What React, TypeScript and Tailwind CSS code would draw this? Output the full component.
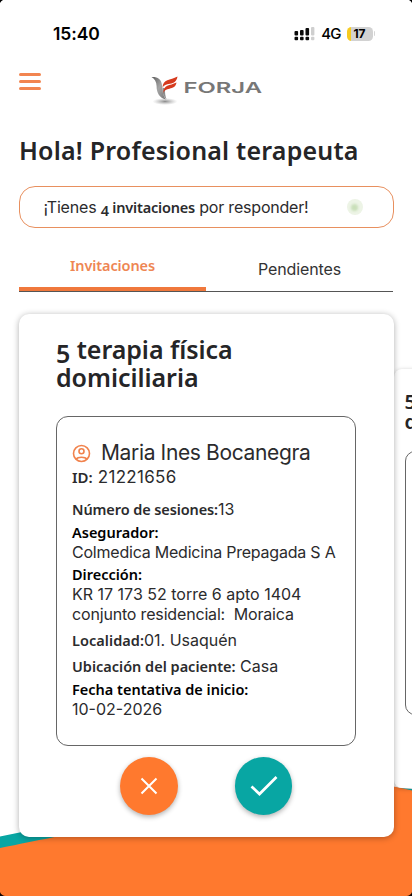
import React from "react";

const heading = "font-['Noto_Sans',sans-serif] font-semibold";

function StatusBar() {
  return (
    <div className="flex h-[56px] items-start justify-between pr-[37px] pl-[53px] font-['Inter',sans-serif] text-black">
      <span className="mt-[22px] text-[17.5px] leading-[24px] font-semibold tracking-[-0.1px]">15:40</span>
      <div className="mt-[26px] flex h-[15px] items-center">
        <svg width="21" height="15" viewBox="0 0 21 15" className="mr-[6px]">
          <g fill="#0a0a0a">
            <rect x="0.5" y="5" width="3.6" height="4.6" rx="1" />
            <rect x="6" y="4" width="3.6" height="5.6" rx="1" />
            <rect x="11.5" y="2" width="3.6" height="7.6" rx="1" />
            <rect x="0.5" y="10.8" width="3.6" height="3.4" rx="1" />
            <rect x="6" y="10.8" width="3.6" height="3.4" rx="1" />
            <rect x="11.5" y="10.8" width="3.6" height="3.4" rx="1" />
          </g>
          <rect x="17" y="1" width="3.4" height="8.6" rx="1" fill="#cfcfcf" />
          <rect x="17" y="10.8" width="3.4" height="3.4" rx="1" fill="#cfcfcf" />
        </svg>
        <span className="mr-[6px] text-[15px] leading-[15px] font-medium tracking-[-0.9px]">4G</span>
        <div className="flex h-[14px] w-[26px] items-center justify-center overflow-hidden rounded-[4.5px] bg-linear-to-r from-[#f6cb20] from-17% to-[#d2d2d2] to-17%">
          <span className="text-[12px] leading-[14px] font-bold tracking-[-0.2px]">17</span>
        </div>
        <div className="ml-[1px] h-[5px] w-[1.5px] rounded-r bg-[#d5d5d5]" />
      </div>
    </div>
  );
}

function Logo() {
  return (
    <svg width="116" height="34" viewBox="0 0 116 34">
      <defs>
        <linearGradient id="wing" x1="0" y1="0" x2="1" y2="1">
          <stop offset="0" stopColor="#5c5c5c" />
          <stop offset="0.5" stopColor="#a5a5a5" />
          <stop offset="1" stopColor="#777" />
        </linearGradient>
        <radialGradient id="ground">
          <stop offset="0" stopColor="#666" stopOpacity="0.75" />
          <stop offset="1" stopColor="#999" stopOpacity="0" />
        </radialGradient>
      </defs>
      <ellipse cx="15" cy="27.500" rx="12.500" ry="3.500" fill="url(#ground)" />
      <path d="M1.500 3 C7 2.500 11.500 5 12 11 C12.300 17 13 21 15.800 25.500 C9.500 24 6.500 18.500 6.600 12 C6.500 7.500 4.500 5 1.500 3Z" fill="url(#wing)" />
      <path d="M16.500 25.500 C13 22 12 18 12.500 13.500 L15 14.500 C14.800 18.500 15.300 22 16.500 25.500Z" fill="#8c8c8c" />
      <path d="M12.500 13.500 C13 5 20 6.500 27.500 2.600 C26.700 7.500 24 9.200 20 9.800 C16 10.400 14 11 12.500 13.500Z" fill="#d63a1e" />
      <path d="M13.300 19 C13.500 10.600 19.500 12 26.500 8.600 C25.700 12.900 23 14.200 19.500 14.700 C16.300 15.200 14.500 16.300 13.300 19Z" fill="#d63a1e" />
      <text x="33.500" y="19.300" textLength="78.500" lengthAdjust="spacingAndGlyphs" fontFamily="Inter" fontSize="15" fontWeight="600" fill="#777">FORJA</text>
    </svg>
  );
}

function Wave() {
  return (
    <svg className="absolute inset-x-0 bottom-0" width="412" height="126" viewBox="0 770 412 126">
      <path d="M0 836.500 L22 832 C130 808 290 778 412 789 V896 H0Z" fill="#08a6a3" />
      <path d="M0 848 C40 840 60 836 110 825 C220 798 320 768 412 790.500 V896 H0Z" fill="#ff792e" />
      <path d="M0 892 Q1 895 5 896 H0Z M412 892 Q411 895 407 896 H412Z" fill="#160500" />
    </svg>
  );
}

function InvitationCard() {
  const body = "font-['Inter',sans-serif] font-normal text-[#2b2b2d]";
  return (
    <section className="z-10 h-[523px] w-[374.5px] shrink-0 rounded-[10px] bg-white px-[37px] pt-[21px] shadow-[0_1px_6px_rgba(0,0,0,0.32)]">
      <h2 className={`${heading} text-[25px] leading-[28px] tracking-[-0.05px] text-[#252527]`}>
        <span className="relative top-[4px]">5</span> terapia física
        <br />
        domiciliaria
      </h2>
      <div className="mt-[25px] h-[330px] w-[300px] rounded-[12px] border border-[#666] pt-[23px] pl-[15px] text-[15px] whitespace-nowrap">
        <div className="flex h-[26px] items-center">
          <svg width="19" height="19" viewBox="0 0 19 19" fill="none" stroke="#f1834d" strokeWidth="1.6">
            <circle cx="9.500" cy="9.500" r="8" />
            <circle cx="9.500" cy="7.200" r="2.500" />
            <path d="M4 15.300C6 12.600 13 12.600 15 15.300" />
          </svg>
          <span className={`${body} ml-[10px] text-[21px] leading-[26px] tracking-[-0.36px]`}>Maria Ines Bocanegra</span>
        </div>
        <p className={`${body} text-[17px] leading-[23px] tracking-[0.3px]`}>
          <b className={`${heading} text-[15px] tracking-normal`}>ID:</b>{" "}21221656
        </p>
        <p className={`${body} mt-[9px] text-[16px] leading-[22px]`}>
          <b className={`${heading} text-[14.500px] tracking-[-0.1px]`}>Número de sesiones:</b>13
        </p>
        <p className={`${heading} mt-[1px] text-[14.500px] leading-[22px] text-black`}>Asegurador:</p>
        <p className={`${body} text-[16px] leading-[18px] tracking-[-0.22px]`}>Colmedica Medicina Prepagada S A</p>
        <p className={`${heading} mt-[2px] text-[14.500px] leading-[22px] text-black`}>Dirección:</p>
        <p className={`${body} text-[16px] leading-[19.500px] whitespace-pre`}>
          KR 17 173 52 torre 6 apto 1404
        </p>
        <p className={`${body} text-[16px] leading-[19.500px] tracking-[-0.17px] whitespace-pre`}>
          {"conjunto residencial:  Moraica"}
        </p>
        <p className={`${body} mt-[5px] text-[16px] leading-[22px]`}>
          <b className={`${heading} text-[14.500px] tracking-[0.05px]`}>Localidad:</b>01. Usaquén
        </p>
        <p className={`${body} mt-[4px] text-[16px] leading-[22px]`}>
          <b className={`${heading} text-[14.500px]`}>Ubicación del paciente:</b> Casa
        </p>
        <p className={`${heading} mt-[1px] text-[14.500px] leading-[22px] text-black`}>Fecha tentativa de inicio:</p>
        <p className={`${body} text-[16px] leading-[18px]`}>10-02-2026</p>
      </div>
      <div className="mt-[11px] flex justify-center gap-[57px]">
        <button className="flex size-[57.5px] items-center justify-center rounded-full bg-[#ff792e] shadow-[0_2px_5px_rgba(0,0,0,0.3)]">
          <svg width="18" height="18" viewBox="0 0 18 18" stroke="white" strokeWidth="2">
            <path d="M1.500 1.500 16.500 16.500M16.500 1.500 1.500 16.500" />
          </svg>
        </button>
        <button className="flex size-[57.5px] items-center justify-center rounded-full bg-[#08a6a3] shadow-[0_2px_5px_rgba(0,0,0,0.3)]">
          <svg width="28" height="22" viewBox="0 0 28 22" fill="none" stroke="white" strokeWidth="2.700">
            <path d="M1.500 11.500 9.500 19 26.500 2" />
          </svg>
        </button>
      </div>
    </section>
  );
}

export default function App() {
  return (
    <main className="relative h-[896px] w-[412px] overflow-hidden bg-white">
      <Wave />
      <div className="relative">
        <StatusBar />
        <header className="flex h-[64px] items-start">
          <button className="mt-[17px] ml-[19px] flex w-[22px] flex-col gap-[4px]">
            <span className="h-[3px] rounded-full bg-[#f28550]" />
            <span className="h-[3px] rounded-full bg-[#f28550]" />
            <span className="h-[3px] rounded-full bg-[#f28550]" />
          </button>
          <div className="mt-[18px] ml-[109px]">
            <Logo />
          </div>
        </header>
        <h1 className={`${heading} mt-[11px] ml-[19px] text-[25px] leading-[38px] tracking-[0.2px] whitespace-nowrap text-[#252527]`}>
          Hola! Profesional terapeuta
        </h1>
        <div className="mt-[17px] ml-[19px] flex h-[42px] w-[374.5px] items-center justify-between rounded-[16px] border border-[#e8905f] pr-[30px] pl-[23.5px] font-['Inter',sans-serif] text-[16px] whitespace-nowrap text-[#2b2b2d]">
          <p className="leading-[22px] tracking-[-0.2px]">
            ¡Tienes <b className={`${heading} text-[14.500px] tracking-[-0.2px]`}><span className="relative top-[3px]">4</span> invitaciones</b> por responder!
          </p>
          <span className="flex size-[16px] items-center justify-center rounded-full bg-[#edf4e6]">
            <span className="size-[7px] rounded-full bg-[#c9dfb9] blur-[1px]" />
          </span>
        </div>
        <nav className="mt-[18px] ml-[19px] flex h-[46px] w-[374px] border-b-[1.500px] border-[#555] text-center">
          <div className={`${heading} w-[187px] border-b-[4px] border-[#f0783c] pt-[8px] text-[14.500px] leading-[22px] tracking-[-0.1px] text-[#ee8653]`}>Invitaciones</div>
          <div className="w-[187px] pt-[11.500px] font-['Inter',sans-serif] text-[16px] leading-[22px] tracking-[-0.1px] text-[#333]">Pendientes</div>
        </nav>
        <div className="mt-[22px] ml-[19px] flex items-start">
          <InvitationCard />
          <section className="mt-[55px] h-[419px] w-[300px] shrink-0 rounded-[8px] bg-white pt-[20px] pl-[11px] shadow-[0_1px_4px_rgba(0,0,0,0.25)]">
            <h2 className={`${heading} h-[62px] text-[20px] leading-[22px] text-[#252527]`}>
              <span className="relative top-[2px]">5</span> terapia física
              <br />
              domiciliaria
            </h2>
            <div className="h-[264px] w-[240px] rounded-[10px] border border-[#666]" />
          </section>
        </div>
      </div>
      <svg className="absolute top-0 left-0" width="412" height="4" viewBox="0 0 412 4">
        <path d="M0 0H3Q1 1 0 3ZM412 0H409Q411 1 412 3Z" fill="#000" />
      </svg>
    </main>
  );
}
